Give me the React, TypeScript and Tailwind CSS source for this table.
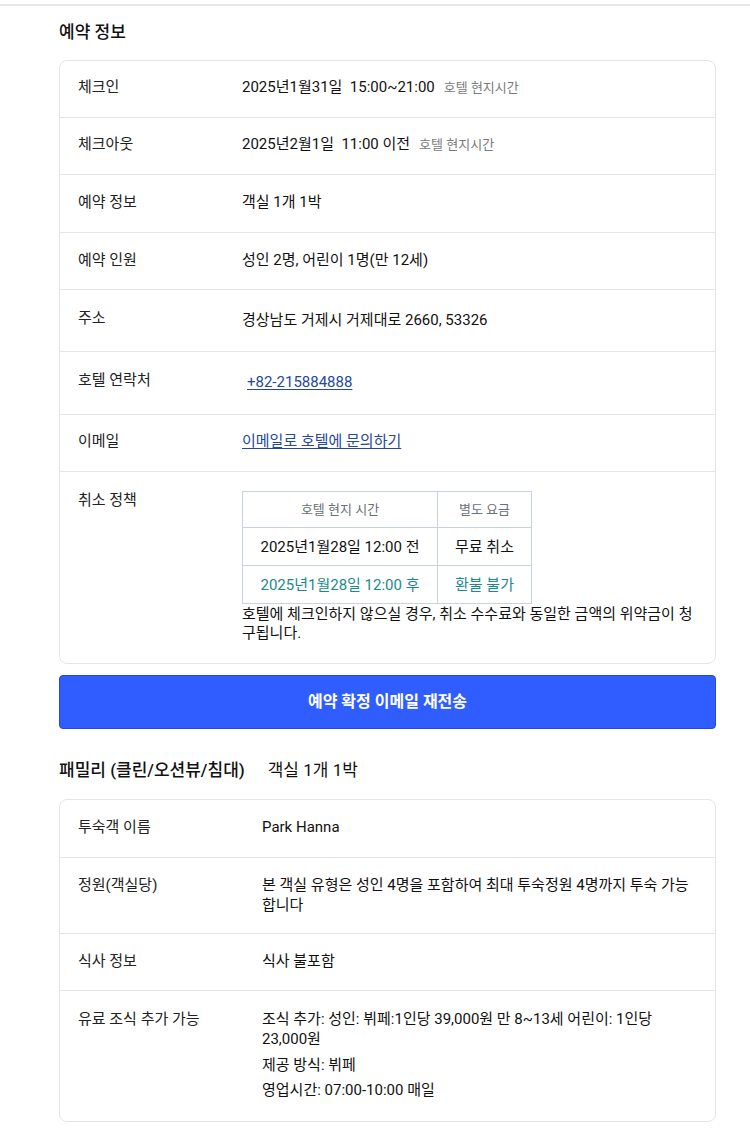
import type { ReactNode } from 'react';

const font = "Roboto, 'Noto Sans CJK KR', 'Noto Sans', sans-serif";

type RowProps = {
  label: string;
  labelWidth: string;
  height?: string;
  pt?: string;
  pb?: string;
  last?: boolean;
  children: ReactNode;
};

function Row({ label, labelWidth, height, pt = 'pt-[17px]', pb = 'pb-[20px]', last, children }: RowProps) {
  return (
    <div className={`flex pl-[18px] pr-[20px] ${pt} ${height ?? ''} ${last ? pb : 'border-b border-[#e3e5e8]'}`}>
      <div className={`${labelWidth} shrink-0 text-[15px] leading-[20px] text-[#222]`}>{label}</div>
      <div className="flex-1 text-[15px] leading-[20px] text-[#111]">{children}</div>
    </div>
  );
}

function LocalTime() {
  return <span className="ml-[9px] text-[13px] text-[#7a7a7a]">호텔 현지시간</span>;
}

function CancelTable() {
  return (
    <table className="border-collapse text-center">
      <thead>
        <tr className="h-[36px]">
          <th className="w-[195px] border border-[#c9d2e2] text-[13px] font-normal text-[#6b6f76]">호텔 현지 시간</th>
          <th className="w-[94px] border border-[#c9d2e2] text-[13px] font-normal text-[#6b6f76]">별도 요금</th>
        </tr>
      </thead>
      <tbody>
        <tr className="h-[38px]">
          <td className="border border-[#c9d2e2] text-[15px] text-[#111]">2025년1월28일 12:00 전</td>
          <td className="border border-[#c9d2e2] text-[15px] text-[#111]">무료 취소</td>
        </tr>
        <tr className="h-[38px]">
          <td className="border border-[#c9d2e2] text-[15px] text-[#1b8a8c]">2025년1월28일 12:00 후</td>
          <td className="border border-[#c9d2e2] text-[15px] text-[#1b8a8c]">환불 불가</td>
        </tr>
      </tbody>
    </table>
  );
}

export default function App() {
  return (
    <div className="min-h-[1133px] bg-white" style={{ fontFamily: font }}>
      <div className="pt-[4px]">
        <div className="h-[2px] bg-[#e6e6e6]" />
      </div>

      <div className="pl-[59px] pr-[34px]">
        <h2 className="mt-[14px] text-[17px] font-medium leading-[24px] text-[#111]">예약 정보</h2>

        <div className="mt-[16px] rounded-[8px] border border-[#e3e5e8]">
          <Row label="체크인" labelWidth="w-[164px]" height="h-[57px]" pt="pt-[16px]">
            2025년1월31일&nbsp;&nbsp;15:00~21:00
            <LocalTime />
          </Row>
          <Row label="체크아웃" labelWidth="w-[164px]" height="h-[57px]" pt="pt-[16px]">
            2025년2월1일&nbsp;&nbsp;11:00 이전
            <LocalTime />
          </Row>
          <Row label="예약 정보" labelWidth="w-[164px]" height="h-[58px]">
            객실 1개 1박
          </Row>
          <Row label="예약 인원" labelWidth="w-[164px]" height="h-[57px]">
            성인 2명, 어린이 1명(만 12세)
          </Row>
          <Row label="주소" labelWidth="w-[164px]" height="h-[62px]" pt="pt-[18px]">
            <span className="relative top-[2px]">경상남도 거제시 거제대로 2660, 53326</span>
          </Row>
          <Row label="호텔 연락처" labelWidth="w-[164px]" height="h-[63px]" pt="pt-[18px]">
            <a href="#" className="relative top-[2px] ml-[5px] text-[#24489a] underline underline-offset-2">
              +82-215884888
            </a>
          </Row>
          <Row label="이메일" labelWidth="w-[164px]" height="h-[57px]" pt="pt-[16px]">
            <a href="#" className="text-[#24489a] underline underline-offset-2">
              이메일로 호텔에 문의하기
            </a>
          </Row>
          <Row label="취소 정책" labelWidth="w-[164px]" pt="pt-[18px]" last>
            <div className="mt-[1px]">
              <CancelTable />
            </div>
            <p className="mt-[1px] leading-[19px]">
              호텔에 체크인하지 않으실 경우, 취소 수수료와 동일한 금액의 위약금이 청구됩니다.
            </p>
          </Row>
        </div>

        <button className="mt-[11px] flex h-[54px] w-full items-center justify-center rounded-[4px] border border-[#2449d8] bg-[#2f5dff] text-[16px] font-bold text-white">
          예약 확정 이메일 재전송
        </button>

        <div className="mt-[29px] flex items-baseline text-[17px] leading-[24px] text-[#111]">
          <span className="font-medium">패밀리 (클린/오션뷰/침대)</span>
          <span className="ml-[23px]">객실 1개 1박</span>
        </div>

        <div className="mt-[17px] rounded-[8px] border border-[#e3e5e8]">
          <Row label="투숙객 이름" labelWidth="w-[184px]" height="h-[58px]">
            Park Hanna
          </Row>
          <Row label="정원(객실당)" labelWidth="w-[184px]" height="h-[76px]">
            본 객실 유형은 성인 4명을 포함하여 최대 투숙정원 4명까지 투숙 가능합니다
          </Row>
          <Row label="식사 정보" labelWidth="w-[184px]" height="h-[57px]">
            식사 불포함
          </Row>
          <Row label="유료 조식 추가 가능" labelWidth="w-[184px]" pt="pt-[18px]" pb="pb-[21px]" last>
            <p>조식 추가: 성인: 뷔페:1인당 39,000원 만 8~13세 어린이: 1인당 23,000원</p>
            <p className="mt-[6px]">제공 방식: 뷔페</p>
            <p className="mt-[5px]">영업시간: 07:00-10:00 매일</p>
          </Row>
        </div>
      </div>
    </div>
  );
}
